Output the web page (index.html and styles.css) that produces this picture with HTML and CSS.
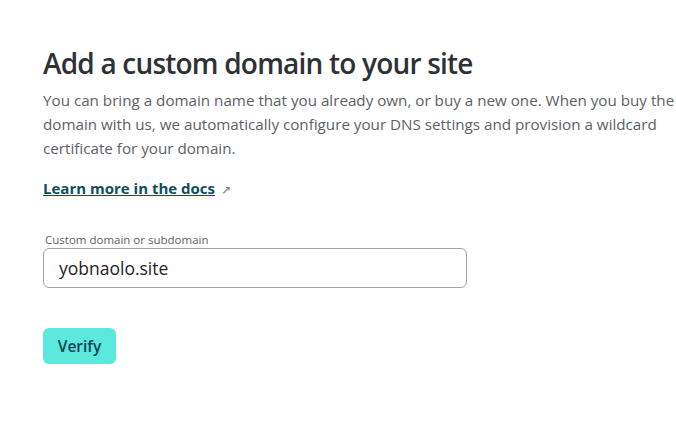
FILE: index.html
```html
<!DOCTYPE html>
<html lang="en">
<head>
<meta charset="utf-8">
<title>Add a custom domain</title>
<link rel="stylesheet" href="styles.css">
</head>
<body>
<main class="page">
  <h1 class="title">Add a custom domain to your site</h1>
  <p class="lead">You can bring a domain name that you already own, or buy a new one. When you buy the domain with us, we automatically configure your DNS settings and provision a wildcard certificate for your domain.</p>
  <p class="docs"><a class="docs-link" href="#">Learn more in the docs</a><span class="arrow">↗</span></p>
  <form class="form">
    <label class="field">
      <span class="field-label">Custom domain or subdomain</span>
      <input class="field-input" type="text" value="yobnaolo.site">
    </label>
    <button class="btn" type="button">Verify</button>
  </form>
</main>
</body>
</html>
```

FILE: styles.css
```css
* { box-sizing: border-box; }
html, body { margin: 0; padding: 0; background: #fff; }
body {
  font-family: "Open Sans", "Noto Sans", sans-serif;
  color: #2e3236;
}
.page {
  padding: 43px 0 0 43px;
  width: 680px;
}
.title {
  margin: 0 0 5px;
  font-size: 28px;
  font-weight: 600;
  letter-spacing: -0.8px;
  line-height: 40px;
  color: #2e3236;
}
.lead {
  margin: 0;
  font-size: 15.2px;
  line-height: 24px;
  color: #5d6166;
}
.docs {
  margin: 16px 0 0;
  font-size: 15px;
  line-height: 24px;
}
.docs-link {
  color: #0d4f5e;
  font-weight: 700;
  text-decoration: underline;
}
.arrow {
  color: #777;
  font-size: 12px;
  margin-left: 6px;
}
.form {
  margin-top: 31px;
  display: flex;
  flex-direction: column;
  align-items: flex-start;
}
.field { display: flex; flex-direction: column; }
.field-label {
  font-size: 11.5px;
  line-height: 14px;
  color: #5d6166;
  margin-left: 2px;
  margin-bottom: 1px;
}
.field-input {
  width: 424px;
  height: 40px;
  border: 1px solid #a3a6a9;
  border-radius: 6px;
  padding: 0 15px;
  font-family: inherit;
  font-size: 17.5px;
  color: #1f2326;
}
.btn {
  margin-top: 40px;
  width: 73px;
  height: 36px;
  border: 0;
  border-radius: 6px;
  background: #5ce8dc;
  color: #0d4452;
  font-family: inherit;
  font-size: 15.5px;
  font-weight: 600;
}
```
